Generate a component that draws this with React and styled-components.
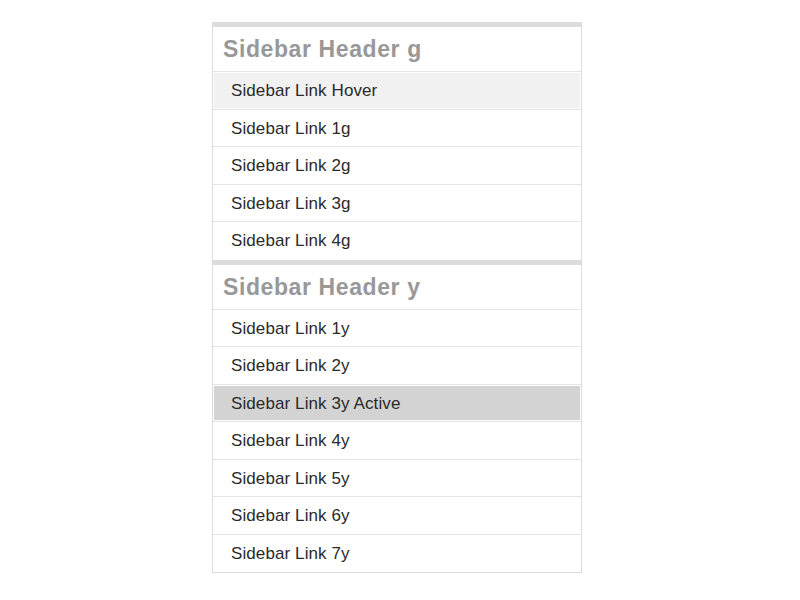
import styled, { createGlobalStyle } from 'styled-components'

const GlobalStyle = createGlobalStyle`
  html, body {
    margin: 0;
    background: #fff;
    font-family: "Liberation Sans", Arial, Helvetica, sans-serif;
  }
`

const groups = [
  {
    title: 'Sidebar Header g',
    links: [
      { label: 'Sidebar Link Hover', state: 'hover' },
      { label: 'Sidebar Link 1g' },
      { label: 'Sidebar Link 2g' },
      { label: 'Sidebar Link 3g' },
      { label: 'Sidebar Link 4g' },
    ],
  },
  {
    title: 'Sidebar Header y',
    links: [
      { label: 'Sidebar Link 1y' },
      { label: 'Sidebar Link 2y' },
      { label: 'Sidebar Link 3y Active', state: 'active' },
      { label: 'Sidebar Link 4y' },
      { label: 'Sidebar Link 5y' },
      { label: 'Sidebar Link 6y' },
      { label: 'Sidebar Link 7y' },
    ],
  },
]

export default function App() {
  return (
    <>
      <GlobalStyle />
      <Page>
        <Sidebar>
          {groups.map(group => (
            <Group key={group.title}>
              <Header>{group.title}</Header>
              <LinkList>
                {group.links.map(link => (
                  <LinkItem key={link.label}>
                    <SidebarLink href="#" $state={link.state}>{link.label}</SidebarLink>
                  </LinkItem>
                ))}
              </LinkList>
            </Group>
          ))}
        </Sidebar>
      </Page>
    </>
  )
}

// Styled Components
const Page = styled.div`
  padding: 22px 0 0 212px;
`

const Sidebar = styled.nav`
  width: 370px;
  box-sizing: border-box;
  border-left: 1px solid #dcdcdc;
  border-right: 1px solid #dcdcdc;
  border-bottom: 1px solid #dcdcdc;
`

const Group = styled.section`
  border-top: 5px solid #dcdcdc;
  margin: 0 -1px;
  padding: 0 1px;
`

const Header = styled.h2`
  margin: 0;
  height: 45px;
  display: flex;
  align-items: center;
  padding: 1px 10px 0;
  box-sizing: border-box;
  font-size: 23px;
  letter-spacing: 0.6px;
  font-weight: bold;
  color: #989898;
  border-bottom: 1px solid #e4e4e4;
`

const LinkList = styled.ul`
  list-style: none;
  margin: 0;
  padding: 0;
`

const LinkItem = styled.li`
  padding: 1px;
  border-bottom: 1px solid #e4e4e4;
  &:last-child {
    border-bottom: none;
    padding-bottom: 2px;
  }
`

const SidebarLink = styled.a`
  display: flex;
  align-items: center;
  box-sizing: border-box;
  height: 34.5px;
  padding: 2px 17px 0;
  font-size: 17px;
  letter-spacing: 0.1px;
  color: #2a2a2a;
  text-decoration: none;
  background: ${p => p.$state === 'active' ? '#d3d3d3' : p.$state === 'hover' ? '#f1f1f1' : 'transparent'};
`
